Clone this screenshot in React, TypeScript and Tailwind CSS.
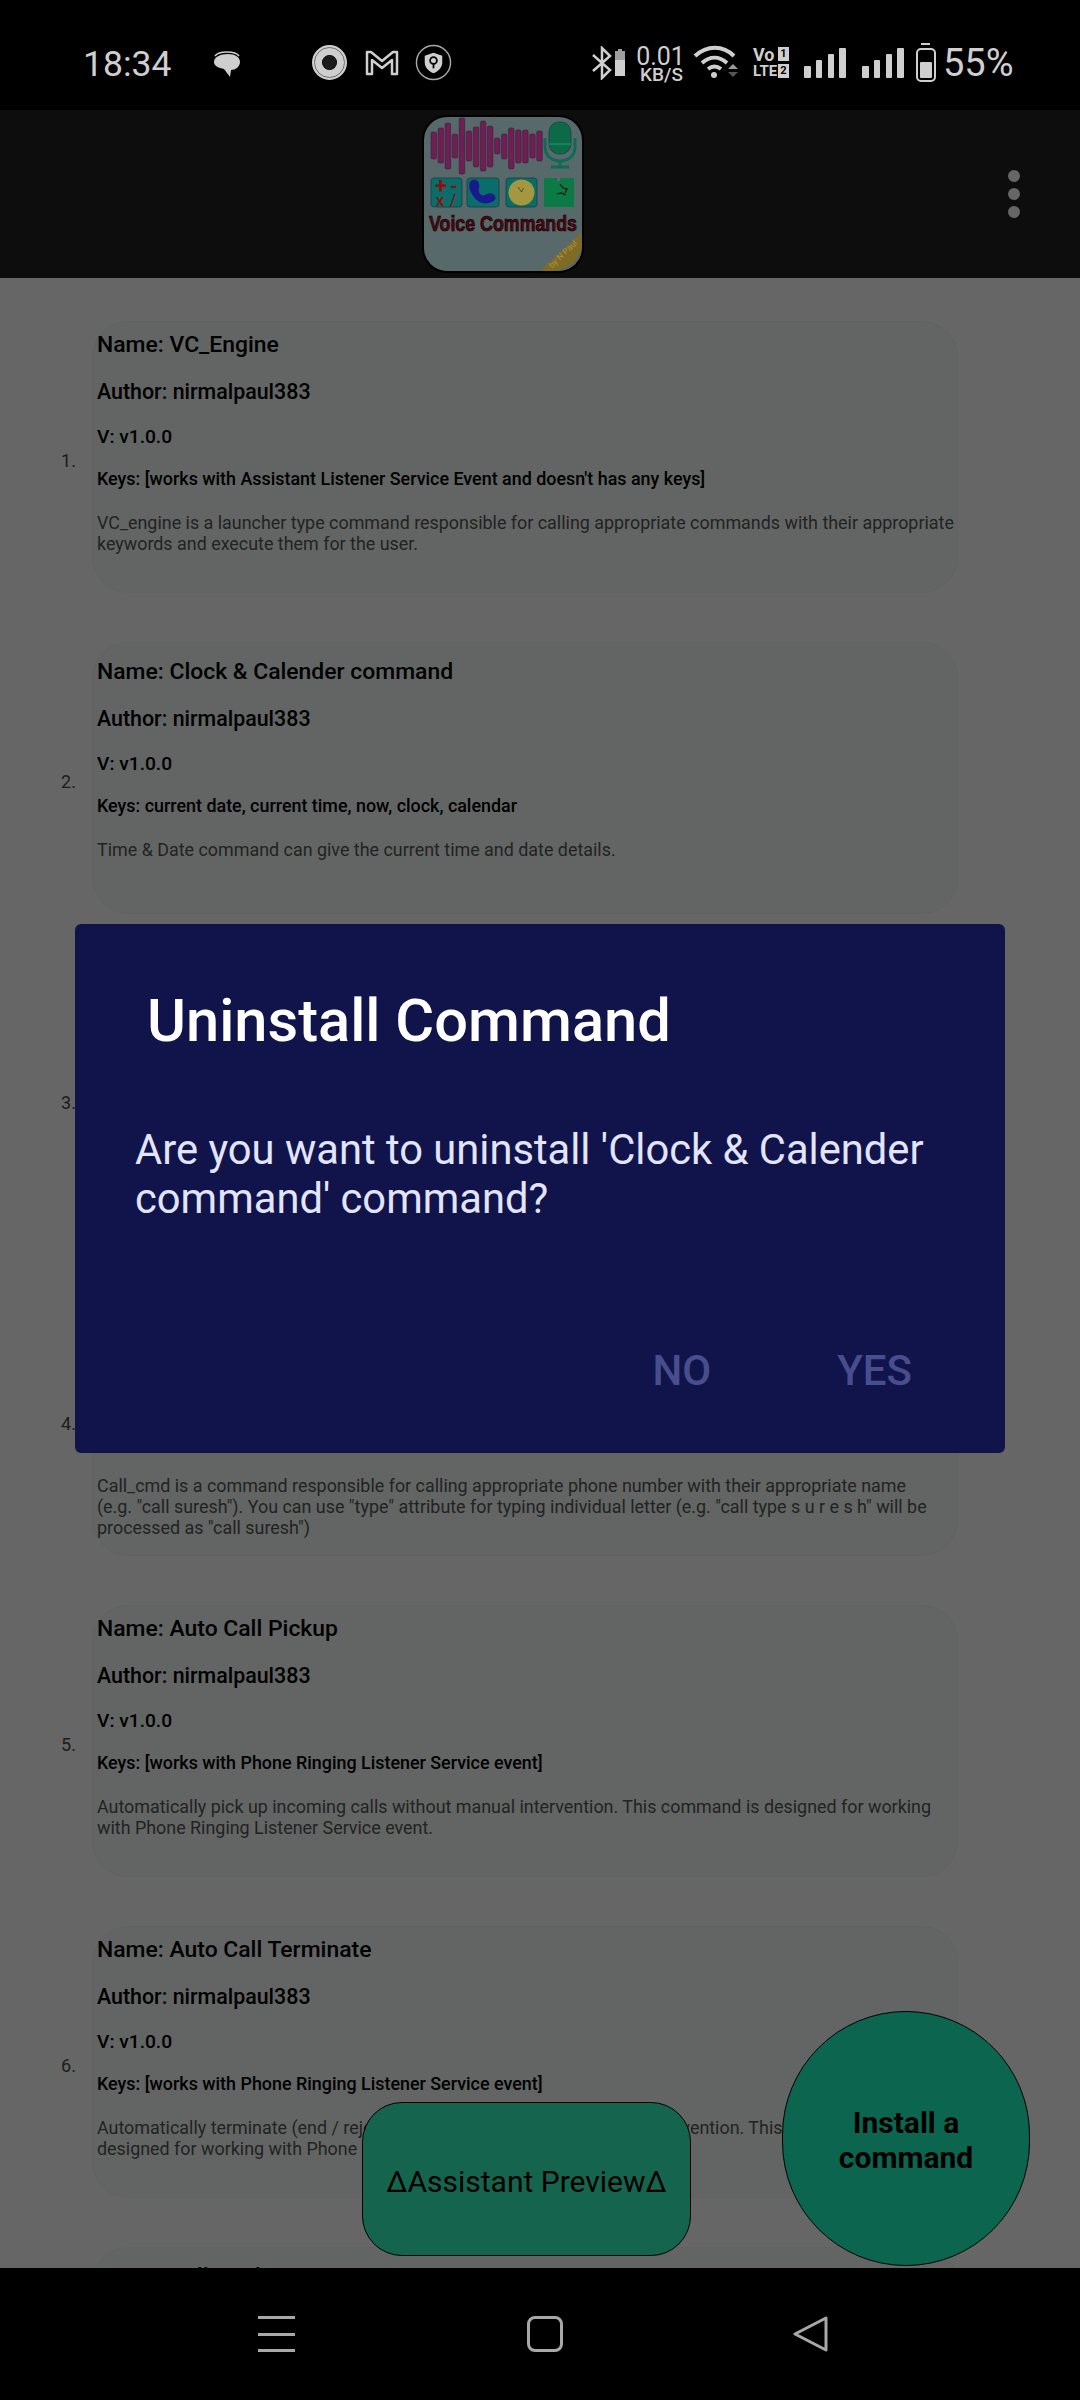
const font = { fontFamily: "Roboto, sans-serif" };

type Command = {
  name: string;
  keys: string;
  description: string[];
};

const commands: Command[] = [
  {
    name: "VC_Engine",
    keys: "[works with Assistant Listener Service Event and doesn't has any keys]",
    description: [
      "VC_engine is a launcher type command responsible for calling appropriate commands with their appropriate",
      "keywords and execute them for the user.",
    ],
  },
  {
    name: "Clock & Calender command",
    keys: "current date, current time, now, clock, calendar",
    description: ["Time & Date command can give the current time and date details."],
  },
  {
    name: "Calculator command",
    keys: "calculate, add, subtract, multiply, divide",
    description: ["Calculator command can solve simple math problems for the user."],
  },
  {
    name: "Call_cmd",
    keys: "call, phone, dial",
    description: [
      "Call_cmd is a command responsible for calling appropriate phone number with their appropriate name",
      '(e.g. "call suresh"). You can use "type" attribute for typing individual letter (e.g. "call type s u r e s h" will be',
      'processed as "call suresh")',
    ],
  },
  {
    name: "Auto Call Pickup",
    keys: "[works with Phone Ringing Listener Service event]",
    description: [
      "Automatically pick up incoming calls without manual intervention. This command is designed for working",
      "with Phone Ringing Listener Service event.",
    ],
  },
  {
    name: "Auto Call Terminate",
    keys: "[works with Phone Ringing Listener Service event]",
    description: [
      "Automatically terminate (end / reject) incoming calls without manual intervention. This command is",
      "designed for working with Phone Ringing Listener Service event.",
    ],
  },
  {
    name: "Call-Back",
    keys: "call back",
    description: ["Calls back the last caller."],
  },
];

function SignalBars({ className }: { className: string }) {
  return (
    <div className={`absolute top-[48px] flex h-[30px] items-end gap-[5.3px] ${className}`}>
      <div className="h-[12px] w-[6.5px] rounded-[1px] bg-[#cfcfcf]" />
      <div className="h-[18px] w-[6.5px] rounded-[1px] bg-[#cfcfcf]" />
      <div className="h-[24px] w-[6.5px] rounded-[1px] bg-[#cfcfcf]" />
      <div className="h-[30px] w-[6.5px] rounded-[1px] bg-[#cfcfcf]" />
    </div>
  );
}

function StatusBar() {
  return (
    <div className="relative h-[110px] shrink-0 bg-black text-[#cfcfcf]">
      <div className="absolute left-[83px] top-[44px] text-[35.5px] leading-[40px]">18:34</div>
      <svg className="absolute left-[212px] top-[49px]" width="30" height="30" viewBox="0 0 30 30">
        <path d="M3 7c2-3 6-4 12-4s10 1 12 4" fill="none" stroke="#cfcfcf" strokeWidth="1.5" />
        <path d="M16 5c7 0 12 3 12 8s-5 8-9 8l-1 7-6-8c-5-1-10-3-10-7 0-5 6-8 14-8z" fill="#cfcfcf" />
      </svg>
      <svg className="absolute left-[311px] top-[44px]" width="37" height="37" viewBox="0 0 37 37">
        <circle cx="18.5" cy="18.5" r="12.5" fill="none" stroke="#cfcfcf" strokeWidth="10" />
        <circle cx="18.5" cy="18.5" r="15" fill="none" stroke="#555" strokeWidth="0.8" />
        <circle cx="18.5" cy="18.5" r="7" fill="#1c1c1c" />
      </svg>
      <svg className="absolute left-[365px] top-[49px]" width="34" height="28" viewBox="0 0 34 28">
        <path d="M2 25V3h4l11 9 11-9h4v22h-5V11l-10 8-10-8v14z" fill="none" stroke="#cfcfcf" strokeWidth="2.5" strokeLinejoin="round" />
      </svg>
      <svg className="absolute left-[415px] top-[44px]" width="37" height="37" viewBox="0 0 38 38">
        <circle cx="19" cy="19" r="17.5" fill="#000" stroke="#a8a8a8" strokeWidth="1.5" />
        <path d="M19 9l9 3v7c0 5-4 9-9 11-5-2-9-6-9-11v-7z" fill="#cfcfcf" />
        <circle cx="19" cy="17" r="3.5" fill="none" stroke="#000" strokeWidth="1.8" />
        <path d="M19 20v5" stroke="#000" strokeWidth="1.8" />
      </svg>
      <svg className="absolute left-[590px] top-[46px]" width="36" height="34" viewBox="0 0 36 34">
        <path d="M3 9l17 15-8 8V2l8 8-17 15" fill="none" stroke="#cfcfcf" strokeWidth="2.5" />
        <path d="M28 3h4v2h3v25h-10V5h3z" fill="#9f9f9f" />
        <rect x="25" y="14" width="10" height="16" fill="#cfcfcf" />
      </svg>
      <div className="absolute left-[632px] top-[43px] w-[57px] text-center text-[25px] leading-[28px]">0.01</div>
      <div className="absolute left-[632px] top-[65px] w-[59px] text-center text-[19px] leading-[20px] font-medium">KB/S</div>
      <svg className="absolute left-[692px] top-[43px]" width="48" height="38" viewBox="0 0 48 38">
        <path d="M3 13c12-11 28-11 39 0" fill="none" stroke="#cfcfcf" strokeWidth="4" />
        <path d="M10 20c8-7 17-7 25 0" fill="none" stroke="#cfcfcf" strokeWidth="4" />
        <path d="M16 26c4-3 9-3 13 0" fill="none" stroke="#cfcfcf" strokeWidth="4" />
        <circle cx="22" cy="32" r="3" fill="#cfcfcf" />
        <path d="M36 26l5-5 5 5z" fill="#9a9a9a" />
        <path d="M36 29l5 5 5-5z" fill="#555" />
      </svg>
      <div className="absolute left-[753px] top-[47px] flex h-[32px] w-[36px] flex-col text-[18px] leading-[16px] font-bold">
        <div className="flex justify-between">
          <span>Vo</span>
          <span className="h-[14px] w-[11px] bg-[#cfcfcf] text-center text-[11px] leading-[14px] text-black">1</span>
        </div>
        <div className="flex justify-between">
          <span className="text-[15px] leading-[16px]">LTE</span>
          <span className="mt-[1px] h-[14px] w-[11px] bg-[#cfcfcf] text-center text-[11px] leading-[14px] text-black">2</span>
        </div>
      </div>
      <SignalBars className="left-[804px]" />
      <SignalBars className="left-[862px]" />
      <svg className="absolute left-[915px] top-[42px]" width="22" height="41" viewBox="0 0 22 41">
        <path d="M6 2h9" stroke="#cfcfcf" strokeWidth="2" />
        <rect x="2" y="7" width="18" height="32" rx="4" fill="none" stroke="#cfcfcf" strokeWidth="2" />
        <rect x="5" y="20" width="12" height="16" rx="1" fill="#cfcfcf" />
      </svg>
      <div className="absolute left-[943px] top-[43px] text-[38px] leading-[40px]">55%</div>
    </div>
  );
}

function Logo() {
  // top / bottom of every wave bar, in logo units
  const bars: [number, number][] = [
    [16, 43],
    [12, 47],
    [7, 53],
    [18, 42],
    [2, 58],
    [15, 45],
    [11, 51],
    [5, 55],
    [10, 51],
    [22, 38],
    [18, 43],
    [12, 53],
    [14, 47],
    [14, 47],
    [18, 42],
    [15, 45],
  ];
  return (
    <svg width="162" height="158" viewBox="-1 -1 162 158">
      <rect x="0" y="0" width="160" height="156" rx="24" fill="#58696b" stroke="#000" strokeWidth="2" />
      {bars.map(([top, bottom], i) => (
        <rect key={i} x={8 + i * 7.05} y={top} width="5.5" height={bottom - top} rx="1.5" fill="#6f1f55" stroke="#2c1a2a" strokeWidth="0.5" />
      ))}
      <rect x="126" y="6" width="22" height="32" rx="10" fill="#0c6a48" stroke="#0a3a2c" strokeWidth="0.6" />
      <path d="M126 28h22" stroke="#158a70" strokeWidth="1.5" />
      <path d="M122 22v9c0 9 7 14 15 14s15-5 15-14v-9" fill="none" stroke="#0f6a58" strokeWidth="3" />
      <path d="M137 45v5M128 51h18" stroke="#0f6a58" strokeWidth="3" />
      <rect x="8" y="62" width="31" height="29" rx="3" fill="#0a6d6a" stroke="#163836" strokeWidth="0.7" />
      <text x="18" y="77" textAnchor="middle" fontSize="22" fontWeight="700" fill="#8a1010">+</text>
      <text x="31" y="77" textAnchor="middle" fontSize="20" fontWeight="700" fill="#8a1010">-</text>
      <text x="17" y="90" textAnchor="middle" fontSize="17" fontWeight="500" fill="#8a1010">x</text>
      <text x="30" y="90" textAnchor="middle" fontSize="17" fontWeight="500" fill="#8a1010">/</text>
      <rect x="44" y="62" width="32" height="29" rx="3" fill="#0a6d6a" stroke="#163836" strokeWidth="0.7" />
      <path d="M47 66c3-4 8-3 9 2 1 3-1 5 0 8s4 4 6 3 5-3 8-1c4 3 3 6-1 8-6 3-14 1-18-5-4-5-6-11-4-15z" fill="#1a1a8c" />
      <rect x="83" y="62" width="31" height="29" rx="3" fill="#0a6d6a" stroke="#163836" strokeWidth="0.7" />
      <circle cx="98.5" cy="76.5" r="13" fill="#a3973f" />
      <path d="M95 71l3.5 5 2-4" fill="none" stroke="#222" strokeWidth="0.6" />
      <path d="M121 62h13v3h3v-3h14v29h-30z" fill="#0b7a45" />
      <path d="M137 68l3 4 4 1-2 4M134 78l4-1 5 2" fill="none" stroke="#111" strokeWidth="1.2" />
      <text
        x="80"
        y="115"
        textAnchor="middle"
        fontSize="22"
        fontWeight="700"
        fill="#560810"
        stroke="#000"
        strokeWidth="0.7"
        textLength="148"
        lengthAdjust="spacingAndGlyphs"
        style={{ fontFamily: "'Liberation Sans', sans-serif" }}
      >
        Voice Commands
      </text>
      <path d="M159 116L117 155h12q24-2 30-24z" fill="#7f6b24" />
      <text x="142" y="140" textAnchor="middle" fontSize="8.5" fill="#a8924a" transform="rotate(-44 142 140)">by N Paul</text>
    </svg>
  );
}

function Header() {
  return (
    <div className="relative flex h-[168px] shrink-0 items-center justify-center bg-[#0d0d0d] pr-[75px]">
      <Logo />
      <div className="absolute right-[60px] top-[60px] flex flex-col gap-[6px]">
        <div className="size-[12px] rounded-full bg-[#666666]" />
        <div className="size-[12px] rounded-full bg-[#666666]" />
        <div className="size-[12px] rounded-full bg-[#666666]" />
      </div>
    </div>
  );
}

function CommandCard({ command, index }: { command: Command; index: number }) {
  const oneLine = command.description.length === 1;
  return (
    <div className="flex items-center">
      <span className="w-[92px] shrink-0 pl-[61px] pt-[8px] text-[18px] leading-[20px] text-[#1c1c1c]">{index + 1}.</span>
      <div className={`h-[272px] w-[866px] rounded-[36px] border border-[#616362] bg-[#636564] pl-[4px] pb-[20px] text-black ${oneLine ? "pt-[16px]" : "pt-[10px]"}`}>
        <div className="text-[22.9px] leading-[26px] font-medium">Name: {command.name}</div>
        <div className="mt-[21px] text-[21.4px] leading-[26px] font-medium">Author: nirmalpaul383</div>
        <div className="mt-[21px] text-[19.2px] leading-[22px] font-medium">V: v1.0.0</div>
        <div className="mt-[20px] text-[17.9px] leading-[22px] font-medium">Keys: {command.keys}</div>
        <div className="mt-[22px] text-[17.9px] leading-[21px] text-[#222222]">
          {command.description.map((line) => (
            <div key={line} className="whitespace-nowrap">{line}</div>
          ))}
        </div>
      </div>
    </div>
  );
}

function UninstallDialog() {
  return (
    <div className="absolute left-[75px] top-[924px] h-[529px] w-[930px] rounded-[6px] bg-[#11144b]">
      <div className="pl-[72px] pt-[62px] text-[59.6px] leading-[70px] font-medium text-white">Uninstall Command</div>
      <div className="mt-[70px] pl-[60px] text-[41.7px] leading-[48.5px] text-[#e3e5ff]">
        Are you want to uninstall 'Clock & Calender
        <br />
        command' command?
      </div>
      <div className="absolute bottom-[58px] right-[93px] flex gap-[126px] text-[42px] leading-[48px] font-medium text-[#484d8d]">
        <span>NO</span>
        <span>YES</span>
      </div>
    </div>
  );
}

function NavBar() {
  return (
    <div className="absolute inset-x-0 bottom-0 flex h-[132px] items-center bg-black pl-[258px]">
      <div className="flex h-[36px] w-[37px] flex-col justify-between">
        <div className="h-[3px] bg-[#a8a8a8]" />
        <div className="h-[3px] bg-[#a8a8a8]" />
        <div className="h-[3px] bg-[#a8a8a8]" />
      </div>
      <div className="ml-[232px] h-[36px] w-[36px] rounded-[8px] border-[3px] border-[#a8a8a8]" />
      <svg className="ml-[230px]" width="36" height="36" viewBox="0 0 36 36">
        <path d="M33 2v32L2 18z" fill="none" stroke="#a8a8a8" strokeWidth="3" strokeLinejoin="round" />
      </svg>
    </div>
  );
}

export default function App() {
  return (
    <div className="relative h-[2400px] w-[1080px] overflow-hidden bg-[#666666]" style={font}>
      <StatusBar />
      <Header />
      <div className="flex flex-col gap-[49px] pt-[43px]">
        {commands.map((command, i) => (
          <CommandCard key={command.name} command={command} index={i} />
        ))}
      </div>
      <UninstallDialog />
      <div className="absolute left-[362px] top-[2102px] flex h-[154px] w-[329px] items-center justify-center rounded-[40px] border border-black bg-[#15654e] pt-[4px] text-[30px] text-black">
        ΔAssistant PreviewΔ
      </div>
      <div className="absolute left-[782px] top-[2011px] flex h-[255px] w-[248px] items-center justify-center rounded-full border border-black bg-[#0b654f] pt-[2px] text-center text-[30px] leading-[35px] font-bold text-black">
        Install a
        <br />
        command
      </div>
      <NavBar />
    </div>
  );
}
